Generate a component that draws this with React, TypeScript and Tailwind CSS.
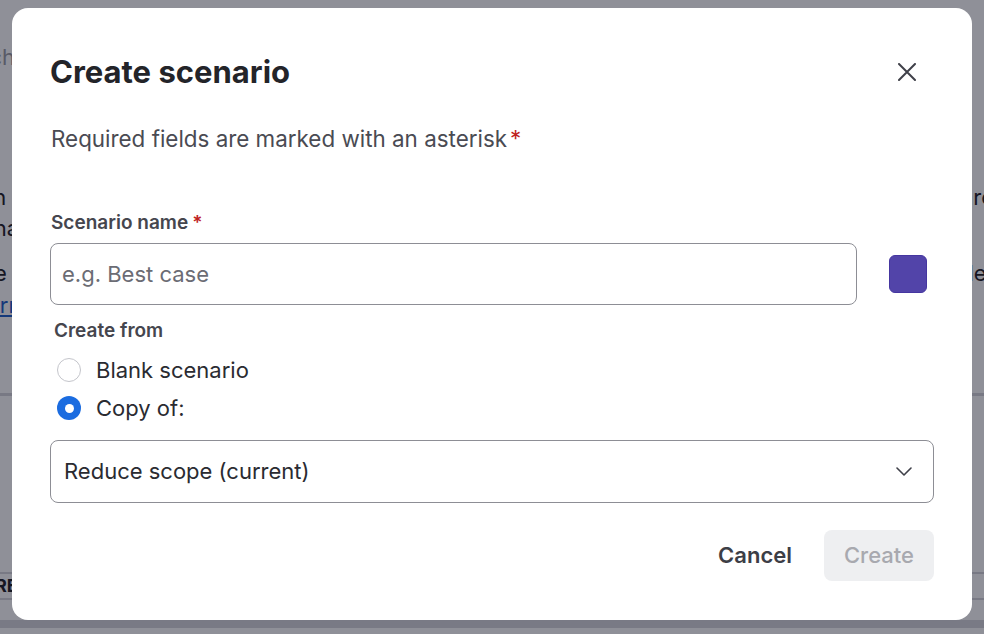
function Radio({ checked, label }: { checked?: boolean; label: string }) {
  return (
    <label className="flex items-center gap-[15px]">
      {checked ? (
        <span className="flex h-[24px] w-[24px] items-center justify-center rounded-full bg-[#1b6ce0]">
          <span className="h-[9px] w-[9px] rounded-full bg-white" />
        </span>
      ) : (
        <span className="h-[24px] w-[24px] rounded-full border border-[#c4c5cb] bg-white" />
      )}
      <span className="text-[22px] leading-[28px] text-[#2a2b31]">{label}</span>
    </label>
  );
}

export default function App() {
  return (
    <div className="relative h-[634px] w-[984px] overflow-hidden bg-white font-['Inter',sans-serif]">
      {/* page behind the dialog */}
      <div className="flex h-full flex-col text-[22px] leading-[28px] text-[#1f2025]">
        <div className="-ml-[58px] mt-[43px] whitespace-nowrap text-[#9a9ba3]">Search</div>
        <div className="mt-[112px] flex justify-between whitespace-nowrap">
          <span className="-ml-[38px]">plan</span>
          <span className="-mr-[10px]">are</span>
        </div>
        <div className="-ml-[38px] mt-[3px] whitespace-nowrap">Plana</div>
        <div className="mt-[17px] flex justify-between whitespace-nowrap">
          <span className="-ml-[48px]">Done</span>
          <span className="-mr-[8px]">model</span>
        </div>
        <div className="-ml-[38px] mt-[4px] whitespace-nowrap text-[#1d5fc8] underline">Learn</div>
        <div className="mt-[74px] h-[3px] bg-[#d4d5da]" />
        <div className="mt-[176px] h-[2px] bg-[#d4d5da]" />
        <div className="-ml-[44px] h-[24px] whitespace-nowrap text-[18px] font-bold leading-[24px]">SCORE</div>
        <div className="h-[2px] bg-[#d4d5da]" />
        <div className="mt-[20px] h-[8px] bg-[#d6d7dc]" />
      </div>

      {/* overlay */}
      <div className="absolute inset-0 flex items-start justify-center bg-[#0a0c1e]/[0.46] pt-[8px]">
        <div className="flex h-[612px] w-[960px] flex-col rounded-[16px] bg-white px-[38px] pt-[44px]">
          <div className="flex items-center justify-between">
            <h2 className="text-[31px] font-bold leading-[40px] text-[#232429]">Create scenario</h2>
            <button className="mr-[18px] text-[#3f4049]">
              <svg width="18" height="18" viewBox="0 0 18 18" fill="none" stroke="currentColor" strokeWidth="2" strokeLinecap="round">
                <path d="M1 1 17 17M17 1 1 17" />
              </svg>
            </button>
          </div>

          <p className="mt-[33px] pl-[1px] text-[22.4px] leading-[28px] text-[#4a4b53]">
            Required fields are marked with an asterisk
            <span className="ml-[3px] text-[#c0231e]">*</span>
          </p>

          <div className="mt-[58px] pl-[1px] text-[19px] font-semibold leading-[24px] text-[#45464e]">
            Scenario name<span className="ml-[4px] text-[#c0231e]">*</span>
          </div>

          <div className="mt-[8px] flex items-center">
            <input
              placeholder="e.g. Best case"
              className="h-[62px] w-[807px] rounded-[8px] border border-[#8d8e95] px-[11px] text-[22px] text-[#2a2b31] outline-none placeholder:text-[#6b6c74]"
            />
            <span className="ml-[32px] h-[38px] w-[38px] rounded-[6px] border border-[#4536a0] bg-[#5244a9]" />
          </div>

          <div className="mt-[14px] pl-[4px] text-[19px] font-semibold leading-[24px] text-[#45464e]">
            Create from
          </div>

          <div className="mt-[13px] flex flex-col gap-[10px] pl-[7px]">
            <Radio label="Blank scenario" />
            <Radio checked label="Copy of:" />
          </div>

          <button className="mt-[18px] flex h-[63px] w-full items-center justify-between rounded-[8px] border border-[#8d8e95] pl-[13px] pr-[21px] text-left text-[22px] text-[#2a2b31]">
            <span>Reduce scope (current)</span>
            <svg width="16" height="9" viewBox="0 0 16 9" fill="none" stroke="#3f4049" strokeWidth="1.6" strokeLinecap="round" strokeLinejoin="round">
              <path d="M1 1 8 8 15 1" />
            </svg>
          </button>

          <div className="mt-[27px] flex items-center justify-end gap-[32px]">
            <button className="text-[22px] font-semibold text-[#3d3e46]">Cancel</button>
            <button className="h-[51px] w-[110px] rounded-[8px] bg-[#eeeff1] text-[22px] font-medium text-[#a8a9af]">
              Create
            </button>
          </div>
        </div>
      </div>
    </div>
  );
}
